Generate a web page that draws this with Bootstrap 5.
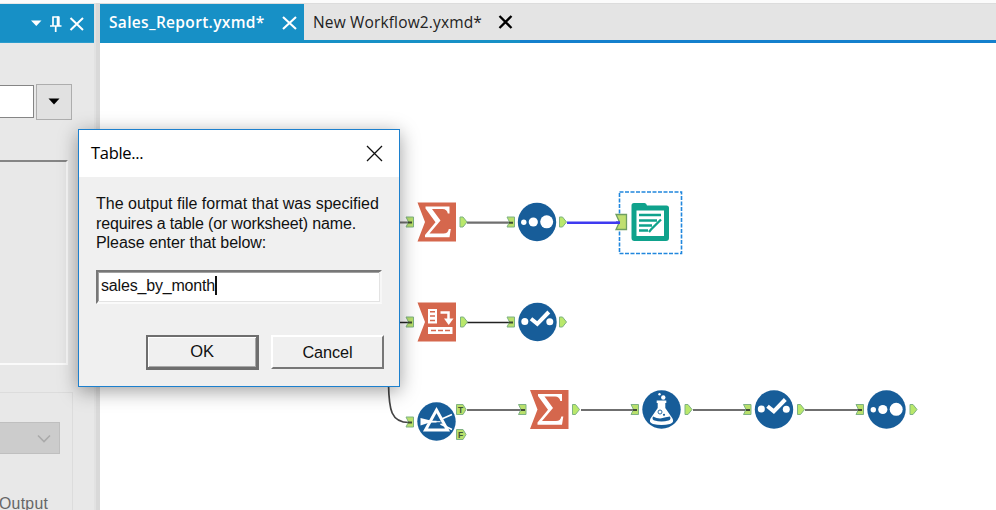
<!DOCTYPE html>
<html lang="en">
<head>
<meta charset="utf-8">
<title>Sales_Report.yxmd</title>
<link href="https://cdn.jsdelivr.net/npm/bootstrap@5.3.0/dist/css/bootstrap.min.css" rel="stylesheet">
<style>
body{width:996px;height:510px;font-family:"Open Sans","Noto Sans",sans-serif;background:#fff}
.app{height:510px;border-top:3px solid #fbfbfb;box-shadow:inset 0 1px #dcdcdc}
.side{width:94px;background:#e8e8e8}
.side-head{height:39px;margin-top:1px;background:#1790c6;border-bottom:1px solid #2b9ccd}
.splitter{width:6px;background:#d9d9d9;border-left:2px solid #e2e2e2}
.combo{margin-top:41px;height:35px}
.combo-field{width:34px;height:33px;margin-top:1px;background:#fff;border:1px solid #858585;border-left:0}
.combo-btn{width:36px;height:36px;margin:-.5px 0 0 1.500px;background:#e1e1e1;border:1px solid #adadad}
.group-a{width:68px;height:205px;margin-top:41px;border-top:2.500px solid #858585;border-right:2px solid #f8f8f8;border-bottom:2px solid #fafafa}
.group-b{width:73px;height:119px;margin-top:27px;border-top:1px solid #dcdcdc;border-right:1px solid #dcdcdc}
.drop{width:60px;height:32px;margin-top:29px;background:#ccc;border:1px solid #bfbfbf;border-left:0}
.out-label{font:15.8px/20px "Liberation Sans",sans-serif;letter-spacing:.3px;color:#666;margin:40px 0 0 -1px}
.tabs{height:39px;margin-top:1px;background:#e4e4e4;border-bottom:3px solid #1480cd;font-size:15.5px}
.tab-a{width:204px;height:39px;background:#1790c6;color:#fff;font-weight:600;padding:0 7px 2px 9px}
.tab-b{width:216px;height:39px;color:#222;border-bottom:3px solid #1790c6;padding:0 7px 0 9px}
.t1{letter-spacing:.33px;padding-top:1px}.t2{letter-spacing:.15px;padding-top:1px}
.dialog{left:78px;top:129px;width:322px;height:258px;background:#f0f0f0;border:1px solid #1c80ce;box-shadow:0 4px 18px rgba(0,0,0,.38)}
.dialog-title{height:47px;background:#fff;padding:0 16px 0 12px;font-size:16.5px;letter-spacing:-.3px;color:#000}
.dialog-content{padding:17px 0 0 17px;font-family:"Liberation Sans",sans-serif;color:#111;font-size:16px}
.msg{line-height:19.6px;white-space:nowrap;margin:0}
.m2{letter-spacing:-.16px}.m3{letter-spacing:-.06px}
.entry{width:286px;height:34px;margin-top:17px;background:#fff;border:2px solid #777;border-right-color:#f7f7f7;border-bottom-color:#fafafa;padding:0 3px 2px;box-shadow:inset -1px -1px #e3e3e3,inset 1px 1px #a0a0a0;letter-spacing:-.18px}
.caret{width:1.5px;height:19px;background:#111}
.actions{margin:31px 15px 0 0;gap:12px}
.key{width:113px;height:34px;background:#f0f0f0;border:2px solid #fff;border-right:2px solid #777;border-bottom:2px solid #777;padding:0;font-size:16.3px;letter-spacing:-.1px;color:#111}
.key-main{height:35px;font-size:16.5px;border:2px solid #6e6e6e;border-right-width:3px;border-bottom-width:3px;box-shadow:inset 1px 1px #fff,inset -1px -1px #a8a8a8}
</style>
<script src="https://cdn.jsdelivr.net/npm/bootstrap@5.3.0/dist/js/bootstrap.bundle.min.js"></script>
</head>
<body class="overflow-hidden position-relative">
<div class="app d-flex overflow-hidden">
  <aside class="side flex-shrink-0 overflow-hidden">
    <div class="side-head">
      <svg class="d-block" width="94" height="38" viewBox="0 4 94 38" fill="none" stroke="#fff">
        <path d="M31 20.5h10.5l-5.2 5.5z" fill="#fff" stroke="none"/>
        <path d="M52.5 17h6.5M53 16.5v9M50 26h11.500M55.700 26.500V32" stroke-width="1.700"/><path d="M58.200 16.500v9.500" stroke-width="3"/>
        <path d="M70.500 18l12.500 12M83 18L70.500 30" stroke-width="2"/>
      </svg>
    </div>
    <div class="combo d-flex">
      <div class="combo-field"></div>
      <div class="combo-btn d-flex align-items-center justify-content-center"><svg width="12" height="7" viewBox="0 0 12 7"><path d="M.5 .5h11L6 6.500z"/></svg></div>
    </div>
    <div class="group-a"></div>
    <div class="group-b overflow-hidden">
      <div class="drop d-flex align-items-center justify-content-end pe-1"><svg class="me-1" width="14" height="9" viewBox="0 0 14 9" fill="none" stroke="#aaa" stroke-width="1.600"><path d="M1 1.500l6 6 6-6"/></svg></div>
      <div class="out-label">Output</div>
    </div>
  </aside>
  <div class="splitter flex-shrink-0"></div>
  <main class="flex-grow-1 d-flex flex-column">
    <div class="tabs d-flex flex-shrink-0">
      <div class="tab-a d-flex align-items-center justify-content-between"><span class="t1">Sales_Report.yxmd*</span><svg width="15" height="14" viewBox="0 0 15 14" stroke="#fff" stroke-width="2.100"><path d="M1 1l13 12M14 1L1 13"/></svg></div>
      <div class="tab-b d-flex align-items-center justify-content-between"><span class="t2">New Workflow2.yxmd*</span><svg width="15" height="14" viewBox="0 0 15 14" stroke="#000" stroke-width="2.300"><path d="M1.500 1l12 12M13.500 1l-12 12"/></svg></div>
    </div>
    <svg class="d-block bg-white" width="896" height="467" viewBox="100 43 896 467">
      <defs>
        <path id="pin" d="M-4-5H3.500V5H-4L-1.500 0z" fill="#b9e06b" stroke="#7fb283"/>
        <path id="pout" d="M-3-5H0L4 0 0 5H-3z" fill="#b9e86b" stroke="#7fb283"/>
        <g id="sum"><path d="M-19.500-19.500H19V19.500H-19.500L-12 0z" fill="#d5674d"/><path d="M-11.500-15.500H12.500V-8.500H10.800Q10-13 5.500-13H-5L3.500-1.500-7.500 11.500H6.500Q11 11.500 11.800 7H13.800L12.500 15.300H-12V13L-1.500 .3-11.500-13.500z" fill="#fff"/></g>
        <g id="three"><circle r="19.200" fill="#175d99"/><g fill="#fff"><circle cx="-13.200" cy=".3" r="2.700"/><circle cx="-3.700" r="4.600"/><circle cx="9.700" cy="-.2" r="6.500"/></g></g>
        <g id="check"><circle r="19.200" fill="#175d99"/><circle cx="-12.700" cy="-.5" r="3.500" fill="#fff"/><circle cx="12.300" cy="-.3" r="3.500" fill="#fff"/><path d="M-6.500-3.200L-.2 1.800 11.300-10" fill="none" stroke="#fff" stroke-width="4"/></g>
      </defs>
      <g fill="none" stroke="#6f6f6f" stroke-width="2.200">
        <path d="M398 222.500h13M467 222.700h44M581 410h54M693 410h54M805 410h55M467 410h56"/>
        <path d="M398 322.500h13M467 322.500h44" stroke="#222" stroke-width="1.600"/>
        <path d="M388.500 384C389 410 391 422.500 409 422.500" stroke="#444" stroke-width="1.700"/>
        <path d="M567 222.800h52" stroke="#3f3af0" stroke-width="2.600"/>
      </g>
      <use href="#pin" x="410" y="222"/><use href="#pout" x="463" y="222"/><use href="#pin" x="511" y="222"/><use href="#pout" x="562.500" y="222"/>
      <use href="#pin" x="410" y="322"/><use href="#pout" x="463.500" y="322"/><use href="#pin" x="511" y="322"/><use href="#pout" x="562.500" y="322"/>
      <use href="#pin" x="410" y="422"/><use href="#pin" x="522.500" y="409.500"/><use href="#pout" x="575.500" y="409.500"/><use href="#pin" x="635" y="409.500"/><use href="#pout" x="688" y="409.500"/><use href="#pin" x="747.500" y="409.500"/><use href="#pout" x="800.500" y="409.500"/><use href="#pin" x="860" y="409.500"/><use href="#pout" x="913" y="409.500"/>
      <path d="M408 222.500h4M509 222.700h4M408 322.500h4M509 322.500h4M408 422.500h4M521 410h4M633 410h4M746 410h4M858 410h4" stroke="#3f4a35" stroke-width="2"/>
      <use href="#sum" x="437" y="222"/><use href="#three" x="537" y="222"/>
      <use href="#check" x="537.500" y="322"/>
      <use href="#sum" x="549.500" y="409.500"/><use href="#check" x="774" y="409.500"/><use href="#three" x="886.500" y="409.500"/>
      <!-- crosstab tool -->
      <g transform="translate(437 322)"><path d="M-19.500-19.500H19V19.500H-19.500L-12 0z" fill="#d5674d"/>
        <path d="M-9-13H0V1.500H-9zM-9 5H15.500V12H-9z" fill="#fff"/>
        <path d="M-7-10.300h5M-7-5.900h5M-7-1.500h5M-6 8.500h5M1 8.500h5M8 8.500h5" stroke="#d5674d" stroke-width="1.500"/>
        <path d="M3.500-9.500H11.500V-3" fill="none" stroke="#fff" stroke-width="2.500"/><path d="M7-3.500h9.500L11.700 3z" fill="#fff"/></g>
      <!-- filter tool -->
      <g transform="translate(436.500 421.500)"><circle r="19.200" fill="#175d99"/>
        <path d="M-16-3.500L-3-.3-16 4z" fill="#fff"/><path d="M-14 .2H0M4-2L15.500-7M4 2.500L15.500 8" stroke="#fff" stroke-width="1.700"/>
        <path d="M0-11.500L11 8.500H-11z" fill="none" stroke="#fff" stroke-width="3"/><path d="M-6 .2H4" stroke="#fff" stroke-width="1"/></g>
      <g fill="#b9e06b" stroke="#7fb283"><path d="M456.500 404.500h6.500l3 5-3 5h-6.500zM456.500 429.500h6.500l3 5-3 5h-6.500z"/></g>
      <g font-family="Liberation Sans,sans-serif" font-size="8.500" font-weight="bold" fill="#3f5438" text-anchor="middle"><text x="460.500" y="412.600">T</text><text x="460.500" y="437.600">F</text></g>
      <!-- formula tool -->
      <g transform="translate(661.500 409.500)"><circle r="19.200" fill="#175d99"/>
        <path d="M-4.800-9H4.800V-6.500H3.800V-1.500L11 9Q13 13 8.500 14.500 0 16.500-8.500 14.500-13 13-11 9L-3.800-1.500V-6.500H-4.800z" fill="#fff"/>
        <circle cx="1.800" cy="-12" r="2.200" fill="#fff"/><circle cx="-2" cy="-15.300" r="1.200" fill="#fff"/>
        <path d="M-8.500 7Q-4 9.300 0 8.800 4 7.500 8.500 7 10 10 7 11 0 13-7 11-10 10-8.500 7z" fill="#175d99"/><circle cx="-1.500" cy="2.500" r="2" fill="none" stroke="#175d99" stroke-width=".9"/><circle cx="2.500" cy="5.300" r="1.100" fill="#175d99"/></g>
      <!-- selected output tool -->
      <rect x="619.500" y="192" width="62" height="61.500" fill="none" stroke="#2187dd" stroke-width="1.600" stroke-dasharray="4 1.500"/>
      <path d="M616 214.500H626.500V229.500H616L619.500 222z" fill="#c0df70" stroke="#6f9e62" stroke-width="1.300"/><path d="M616 222.700h4" stroke="#3f3af0" stroke-width="2.600"/>
      <path d="M631.500 205.500Q631.500 203 634 203H644.500Q646.500 203 647 205.500H666.500Q669 205.500 669 208V238Q669 241 666 241H634.500Q631.500 241 631.500 238z" fill="#0fa28c"/>
      <rect x="636.500" y="210.500" width="27.500" height="25.500" fill="#fff"/>
      <path d="M639 215H661M639 220.500H657M639 225.500H652M639 230.500H648" stroke="#0fa28c" stroke-width="2.500"/>
      <path d="M661 219.500L651 229.500 649 232" fill="none" stroke="#0fa28c" stroke-width="2.300"/>
    </svg>
  </main>
</div>
<section class="dialog position-absolute" role="dialog">
  <div class="dialog-title d-flex align-items-center justify-content-between"><span>Table...</span><svg width="17" height="17" viewBox="0 0 17 17" stroke="#111" stroke-width="1.300"><path d="M1 1l15 15M16 1L1 16"/></svg></div>
  <div class="dialog-content">
    <p class="msg"><span class="m1">The output file format that was specified</span><br><span class="m2">requires a table (or worksheet) name.</span><br><span class="m3">Please enter that below:</span></p>
    <div class="entry d-flex align-items-center"><span>sales_by_month</span><span class="caret"></span></div>
    <div class="actions d-flex justify-content-end"><button class="key key-main">OK</button><button class="key">Cancel</button></div>
  </div>
</section>
</body>
</html>
